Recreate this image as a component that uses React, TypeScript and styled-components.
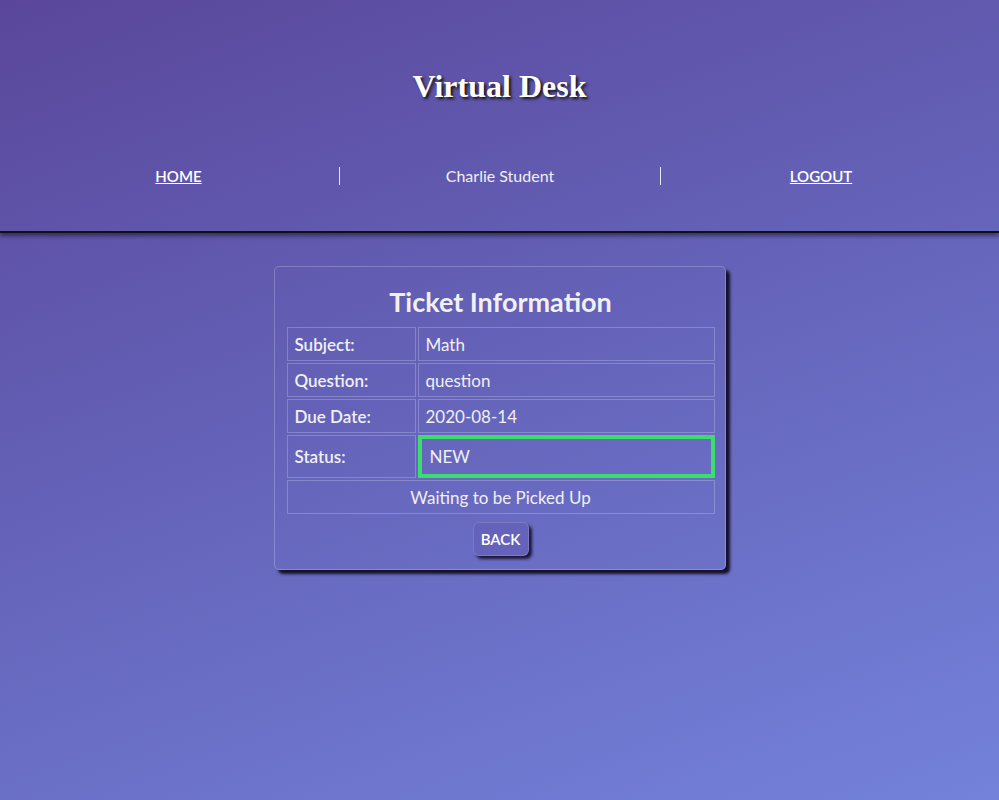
import React from "react";
import styled, { createGlobalStyle } from "styled-components";

const Global = createGlobalStyle`
  html, body { margin: 0; padding: 0; }
  body {
    min-height: 800px;
    background: linear-gradient(160deg, #5a479b 0%, #6462b8 45%, #7482da 100%);
    font-family: "Lato", "Open Sans", sans-serif;
    color: #f0f0f5;
  }
`;

const Page = styled.div`
  min-height: 800px;
  display: flex;
  flex-direction: column;
`;

const Header = styled.header`
  height: 231px;
  border-bottom: 2px solid #111;
  box-shadow: 0 3px 4px rgba(0, 0, 0, 0.45);
  display: flex;
  flex-direction: column;
  align-items: center;
`;

const Title = styled.h1`
  margin: 67px 0 0;
  font-family: "Liberation Serif", "Times New Roman", serif;
  font-weight: 700;
  font-size: 32px;
  line-height: 38px;
  color: #fff;
  text-shadow: 2px 2px 3px #111;
`;

const Nav = styled.nav`
  margin-top: 62px;
  width: 963px;
  display: grid;
  grid-template-columns: 1fr 1fr 1fr;
`;

const NavItem = styled.div<{ $divider?: boolean }>`
  text-align: center;
  font-size: 16px;
  line-height: 18px;
  border-left: ${(p) => (p.$divider ? "1px solid #e8e8f0" : "none")};
  color: #f0f0f5;
`;

const NavLink = styled.a`
  color: #fff;
  font-weight: 600;
  font-size: 15px;
  text-decoration: underline;
  cursor: pointer;
`;

const Main = styled.main`
  display: flex;
  justify-content: center;
  padding-top: 33px;
`;

const Card = styled.section`
  width: 452px;
  box-sizing: border-box;
  border: 1px solid rgba(255, 255, 255, 0.22);
  border-radius: 5px;
  box-shadow: 4px 4px 3px #15102a;
  padding: 10px 8px 13px 10px;
  display: flex;
  flex-direction: column;
  align-items: center;
`;

const CardTitle = styled.h2`
  margin: 8px 0 6px;
  font-size: 27px;
  line-height: 34px;
  font-weight: 700;
  color: #f0f0f5;
`;

const Table = styled.table`
  width: 100%;
  border-collapse: separate;
  border-spacing: 2px;
`;

const Cell = styled.td<{ $label?: boolean; $highlight?: boolean; $center?: boolean }>`
  border: ${(p) => (p.$highlight ? "4px solid #3ddc6e" : "1px solid rgba(255,255,255,0.22)")};
  height: ${(p) => (p.$highlight ? "43px" : "34px")};
  box-sizing: border-box;
  padding: ${(p) => (p.$highlight ? "0 8px" : "0 7px")};
  width: ${(p) => (p.$label ? "129px" : "auto")};
  text-align: ${(p) => (p.$center ? "center" : "left")};
  font-size: 17px;
  font-weight: ${(p) => (p.$label ? 600 : 400)};
  color: #f0f0f5;
`;

const BackButton = styled.button`
  margin-top: 6px;
  width: 56px;
  height: 34px;
  border: 1px solid rgba(255, 255, 255, 0.15);
  border-radius: 6px;
  background: #6562bc;
  color: #fff;
  font-family: "Lato", sans-serif;
  font-size: 15px;
  font-weight: 600;
  box-shadow: 3px 3px 3px #1d1838;
  cursor: pointer;
`;

export default function App() {
  return (
    <Page>
      <Global />
      <Header>
        <Title>Virtual Desk</Title>
        <Nav>
          <NavItem>
            <NavLink>HOME</NavLink>
          </NavItem>
          <NavItem $divider>Charlie Student</NavItem>
          <NavItem $divider>
            <NavLink>LOGOUT</NavLink>
          </NavItem>
        </Nav>
      </Header>
      <Main>
        <Card>
          <CardTitle>Ticket Information</CardTitle>
          <Table>
            <tbody>
              <tr>
                <Cell $label>Subject:</Cell>
                <Cell>Math</Cell>
              </tr>
              <tr>
                <Cell $label>Question:</Cell>
                <Cell>question</Cell>
              </tr>
              <tr>
                <Cell $label>Due Date:</Cell>
                <Cell>2020-08-14</Cell>
              </tr>
              <tr>
                <Cell $label>Status:</Cell>
                <Cell $highlight>NEW</Cell>
              </tr>
              <tr>
                <Cell colSpan={2} $center>
                  Waiting to be Picked Up
                </Cell>
              </tr>
            </tbody>
          </Table>
          <BackButton>BACK</BackButton>
        </Card>
      </Main>
    </Page>
  );
}
